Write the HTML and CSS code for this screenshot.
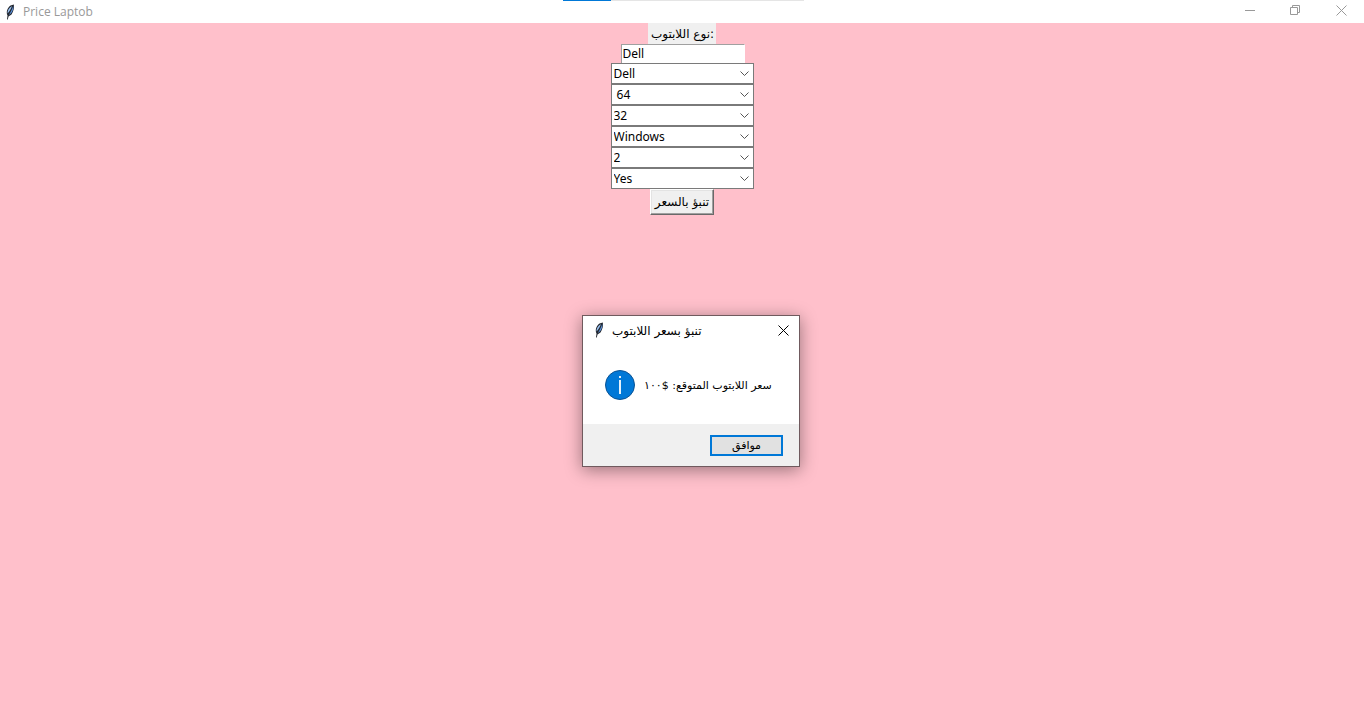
FILE: index.html
```html
<!DOCTYPE html>
<html lang="en">
<head>
<meta charset="utf-8">
<title>Price Laptob</title>
<link rel="stylesheet" href="styles.css">
</head>
<body>
<svg class="defs" aria-hidden="true">
  <symbol id="feather" viewBox="0 0 10 16">
    <path d="M2 15.500 2.500 11.500C1 8.500 2 4 5.500 1.600L8.800.500C9.500 3.500 8.500 7.500 6.500 10.500L3.500 12.500 2.800 15.500Z" fill="#23272f"/>
    <path d="M2.500 9.500C2.400 6.500 4 3.500 7 2 5.800 5 4.300 7.500 2.500 9.500Z" fill="#9cc4f5"/>
    <path d="M3.800 11C5.500 8.500 7 5.500 8.300 1.800 8.600 5.500 7.300 9 3.800 11Z" fill="#5b93e0"/>
  </symbol>
  <symbol id="chevron" viewBox="0 0 9 5">
    <path d="M.5.500 4.500 4.500 8.500.500" fill="none" stroke="#555"/>
  </symbol>
  <symbol id="close" viewBox="0 0 11 11">
    <path d="M.5.500 10.500 10.500M10.500.500.500 10.500" fill="none" stroke="currentColor"/>
  </symbol>
</svg>

<header class="titlebar">
  <svg class="feather"><use href="#feather"/></svg>
  <h1 class="title">Price Laptob</h1>
  <div class="controls">
    <button class="control" type="button" aria-label="Minimize"><svg width="11" height="11"><path d="M1 5.500H11" stroke="currentColor"/></svg></button>
    <button class="control" type="button" aria-label="Restore"><svg width="11" height="11" fill="none" stroke="currentColor"><path d="M.5 2.500H7.500V9.500H.5ZM2.500 2.500V.5H9.500V7.500H7.500"/></svg></button>
    <button class="control" type="button" aria-label="Close"><svg width="11" height="11"><use href="#close"/></svg></button>
  </div>
</header>
<div class="loading"></div>

<main class="client">
  <form class="form">
    <label class="label" for="type">نوع اللابتوب:</label>
    <input class="entry" id="type" type="text" value="Dell">
    <div class="combo"><select aria-label="Brand"><option>Dell</option></select><svg><use href="#chevron"/></svg></div>
    <div class="combo"><select aria-label="Storage"><option>&nbsp;64</option></select><svg><use href="#chevron"/></svg></div>
    <div class="combo"><select aria-label="Memory"><option>32</option></select><svg><use href="#chevron"/></svg></div>
    <div class="combo"><select aria-label="System"><option>Windows</option></select><svg><use href="#chevron"/></svg></div>
    <div class="combo"><select aria-label="Count"><option>2</option></select><svg><use href="#chevron"/></svg></div>
    <div class="combo"><select aria-label="Option"><option>Yes</option></select><svg><use href="#chevron"/></svg></div>
    <button class="predict" type="button">تنبؤ بالسعر</button>
  </form>
</main>

<section class="dialog" role="dialog" aria-labelledby="dialog-title">
  <header class="dialog-bar">
    <svg class="feather"><use href="#feather"/></svg>
    <h2 class="dialog-title" id="dialog-title" dir="rtl">تنبؤ بسعر اللابتوب</h2>
    <button class="dialog-close" type="button" aria-label="Close"><svg width="11" height="11"><use href="#close"/></svg></button>
  </header>
  <div class="dialog-body">
    <svg class="info" viewBox="0 0 30 30">
      <circle cx="15" cy="15" r="14.500" fill="#0078d7" stroke="#0b5394"/>
      <path d="M15 10V24M15 6V8" stroke="#fff" stroke-width="1.800"/>
    </svg>
    <p class="message" dir="rtl">سعر اللابتوب المتوقع: $١٠٠</p>
  </div>
  <footer class="dialog-footer">
    <button class="ok" type="button">موافق</button>
  </footer>
</section>
</body>
</html>
```
FILE: styles.css
```css
* {
  box-sizing: border-box;
}

body {
  display: flex;
  flex-direction: column;
  min-height: 100vh;
  margin: 0;
  background: #ffc0cb;
  color: #000;
  font: 12px/16px "Noto Sans", "DejaVu Sans", sans-serif;
}

button,
input,
select {
  margin: 0;
  color: inherit;
  font: inherit;
}

svg {
  display: block;
}

.defs {
  position: absolute;
  width: 0;
  height: 0;
}

.titlebar {
  display: flex;
  align-items: center;
  height: 23px;
  padding: 0 0 0 5px;
  background: #fff;
  color: #999;
}

.feather {
  flex: none;
  width: 10px;
  height: 16px;
}

.title {
  flex: 1;
  margin: 0 0 0 8px;
  font: 12px/16px "Open Sans", sans-serif;
}

.controls {
  display: flex;
  align-self: flex-start;
}

.control {
  display: grid;
  place-items: center;
  width: 46px;
  height: 21px;
  padding: 0;
  border: 0;
  background: none;
}

.loading {
  position: absolute;
  top: 0;
  left: 563px;
  width: 241px;
  height: 1px;
  background: linear-gradient(to right, #0078d7 20%, #e5e5e5 20%);
}

.client {
  flex: 1;
}

.form {
  display: flex;
  flex-direction: column;
  align-items: center;
}

.label {
  height: 21px;
  padding: 1px 2px 0 3px;
  background: #f0f0f0;
  font: 12px/21px "DejaVu Sans", sans-serif;
}

.entry {
  width: 124px;
  height: 19px;
  margin-left: 1px;
  padding: 0 1px 1px;
  border: 1px solid #fff;
  border-top-color: #a0a0a0;
  border-left-color: #a0a0a0;
  border-bottom: 0;
  background: #fff;
}

.combo {
  display: grid;
  align-items: center;
  width: 143px;
  height: 21px;
  border: 1px solid #7a7a7a;
  background: #fff;
}

.combo select {
  grid-area: 1 / 1;
  width: 100%;
  height: 19px;
  padding: 0 20px 0 2px;
  border: 0;
  appearance: none;
  background: none;
}

.combo svg {
  grid-area: 1 / 1;
  justify-self: end;
  width: 9px;
  height: 5px;
  margin-right: 4px;
  pointer-events: none;
}

.predict {
  height: 26px;
  padding: 0 4px;
  border: 1px solid;
  border-color: #fff #696969 #696969 #fff;
  background: #f0f0f0;
  box-shadow: inset -1px -1px #a0a0a0, inset 1px 1px #e3e3e3;
  font: 12px/20px "DejaVu Sans", sans-serif;
}

.dialog {
  position: absolute;
  top: 315px;
  left: 582px;
  width: 218px;
  border: 1px solid #705a5e;
  background: #fff;
  box-shadow: 0 3px 16px rgba(0, 0, 0, 0.4);
  font-family: "DejaVu Sans", sans-serif;
}

.dialog-bar {
  display: flex;
  align-items: center;
  height: 28px;
  padding: 0 10px 0 11px;
}

.dialog-title {
  margin: 0 auto 0 8px;
  padding-top: 2px;
  font: 12px/20px "DejaVu Sans", sans-serif;
}

.dialog-close {
  padding: 0;
  border: 0;
  background: none;
}

.dialog-body {
  display: flex;
  align-items: center;
  gap: 9px;
  height: 80px;
  padding: 2px 22px 0;
}

.info {
  flex: none;
  width: 30px;
  height: 30px;
}

.message {
  margin: 0;
  padding-top: 2px;
  font-size: 11px;
  white-space: nowrap;
}

.dialog-footer {
  display: flex;
  align-items: center;
  justify-content: flex-end;
  height: 42px;
  padding: 0 16px;
  background: #f0f0f0;
}

.ok {
  width: 73px;
  height: 21px;
  padding: 1px 0 0;
  border: 2px solid #0078d7;
  background: #e1e1e1;
  font-size: 11px;
  line-height: 16px;
}
```
